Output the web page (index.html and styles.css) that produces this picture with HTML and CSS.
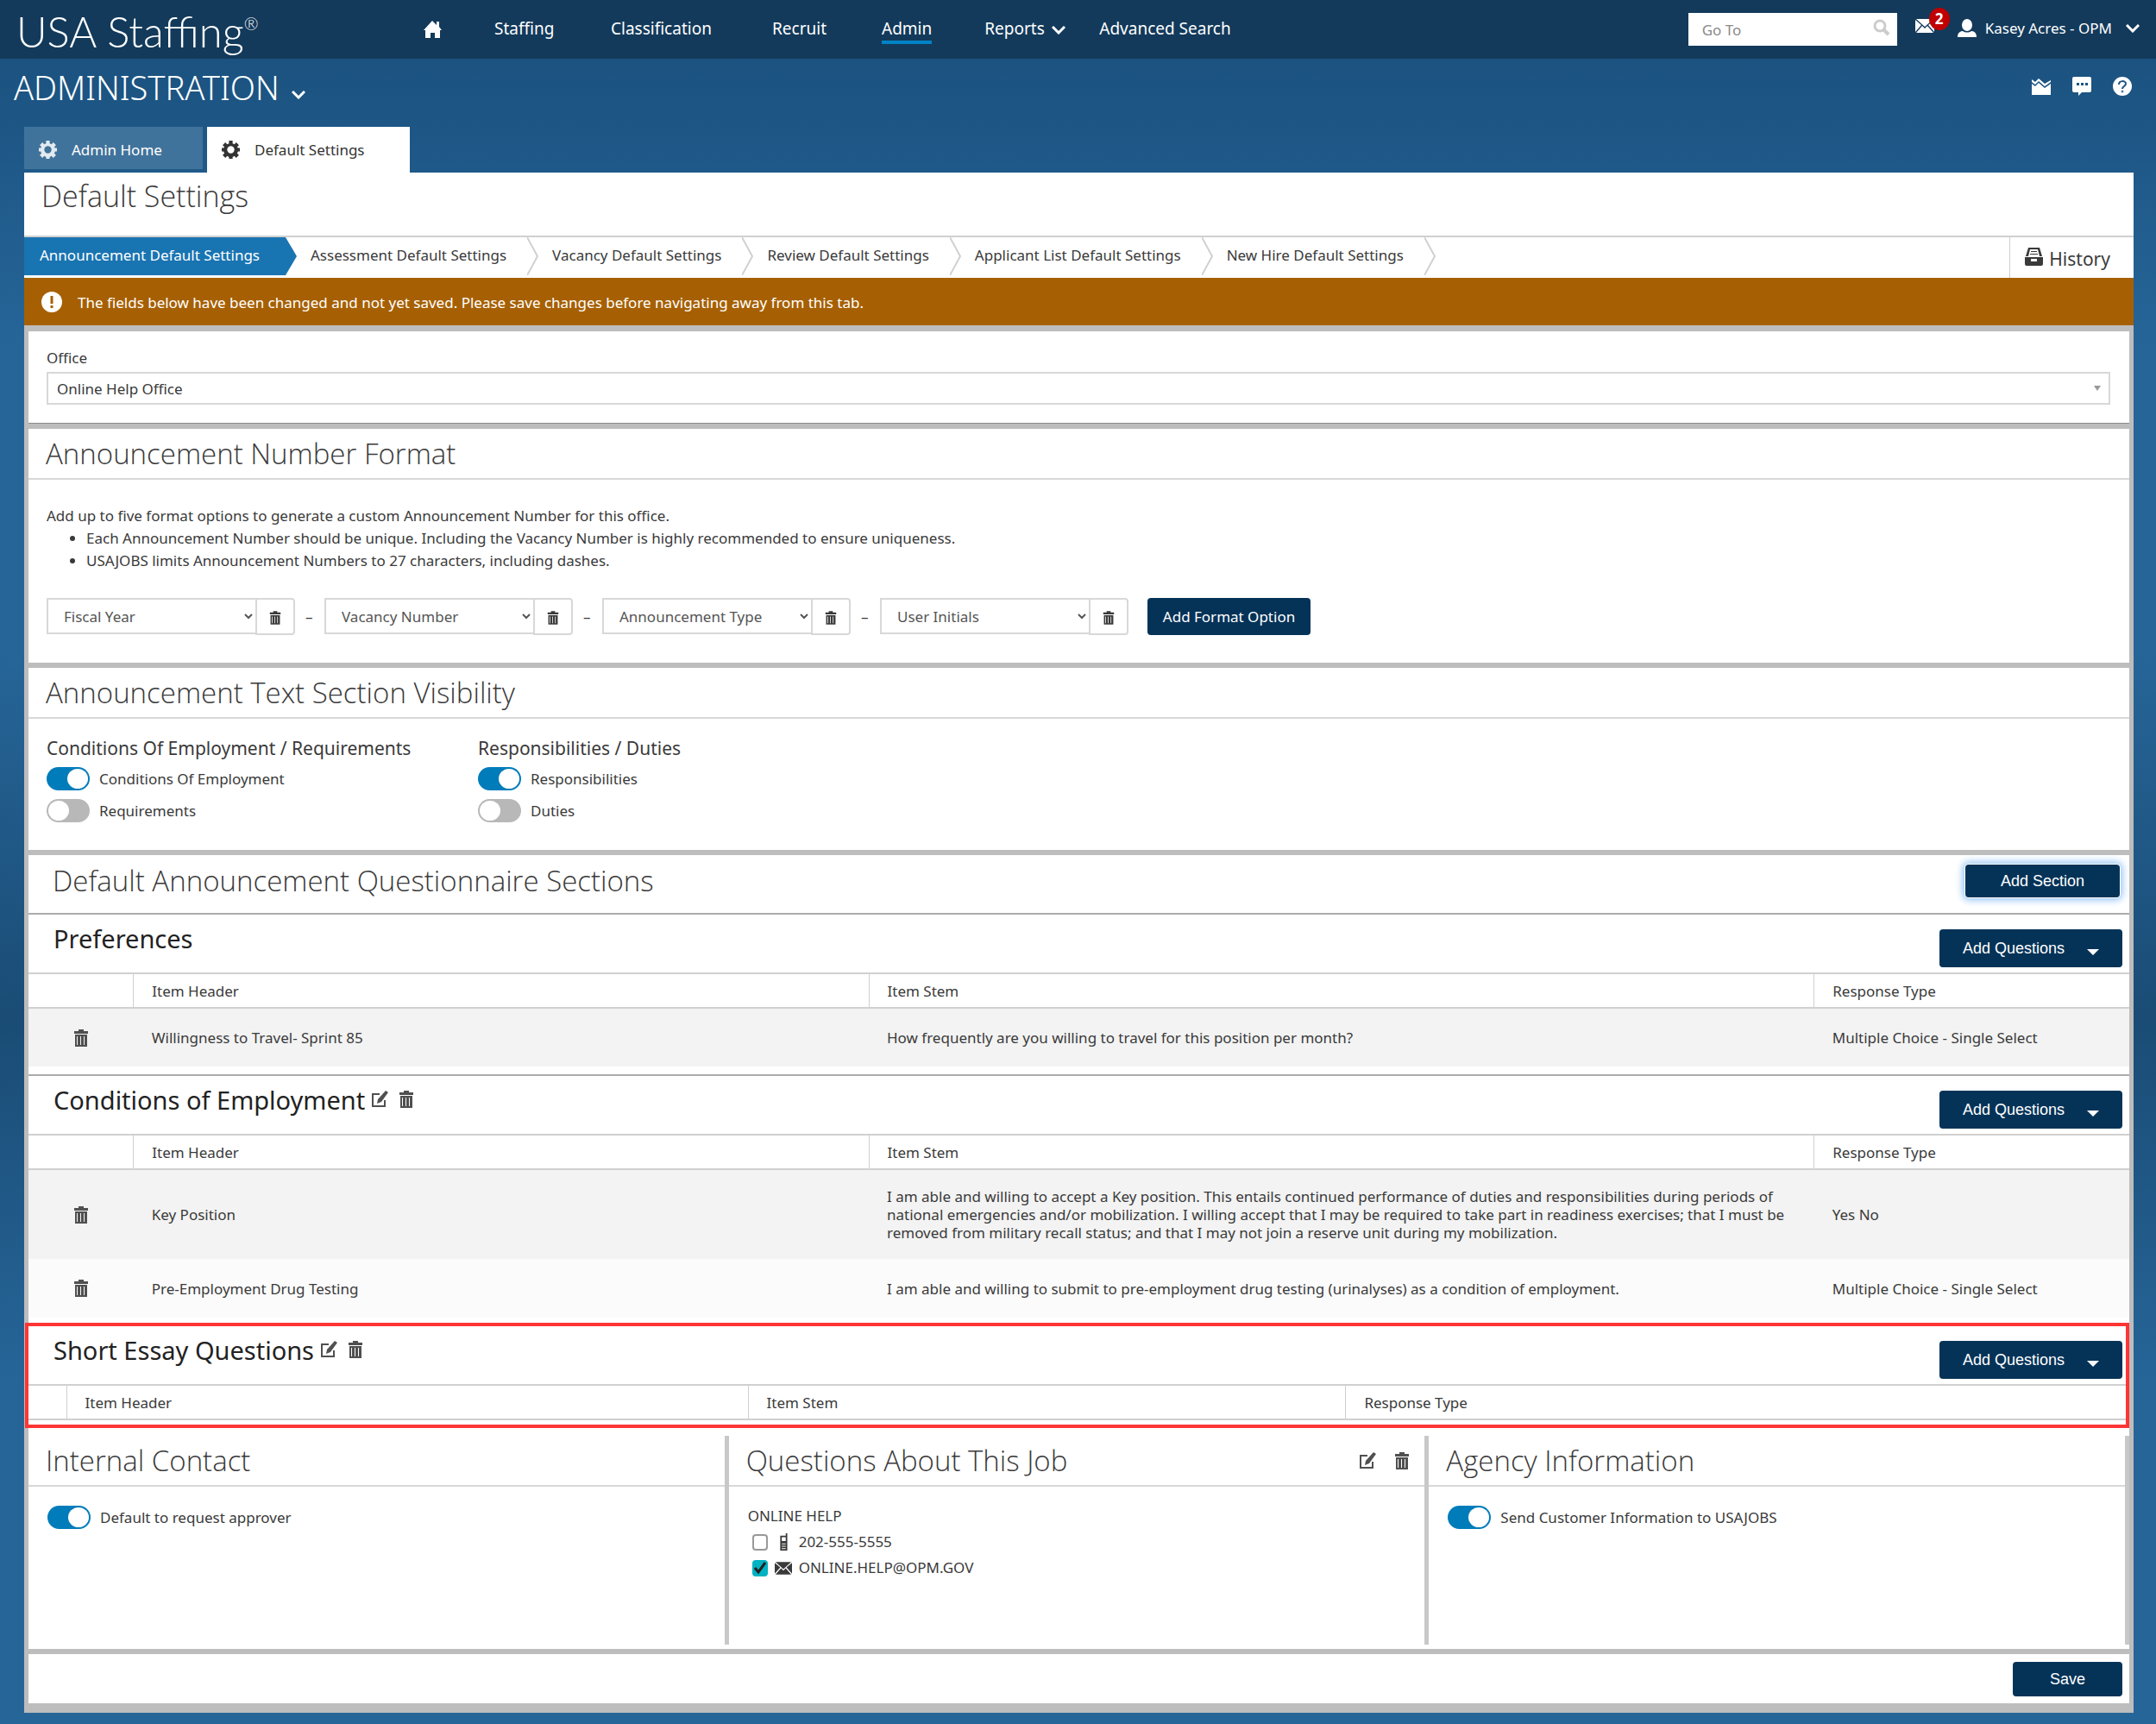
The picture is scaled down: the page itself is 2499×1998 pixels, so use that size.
FILE: index.html
```html
<!DOCTYPE html>
<html lang="en">
<head>
    <meta charset="UTF-8">
    <meta name="viewport" content="width=device-width, initial-scale=1.0">
    <title>USA Staffing - Default Settings</title>
    <link rel="stylesheet" href="styles.css">
</head>
<body>
    <svg class="sprite" aria-hidden="true">
        <symbol id="trash" viewBox="0 0 18 20">
            <path d="M6 0h6v2h5v3H1V2h5z"/>
            <path fill-rule="evenodd" d="M2 6h14v14H2zM4 8v10h1V8zM8 8v10h1V8zM12 8v10h1V8z"/>
        </symbol>
        <symbol id="edit" viewBox="0 0 20 20">
            <path fill="none" stroke="currentColor" stroke-width="2" d="M10 4H2v14h14v-7"/>
            <path d="M17 0l3 2-8 11-5 2 1-5z"/>
        </symbol>
        <symbol id="gear" viewBox="0 0 20 20">
            <path fill-rule="evenodd" d="M8 0h4v3l2 1 2-2 3 3-2 2 1 1h2v4h-2l-1 2 2 2-3 3-2-2-2 1v2H8v-2l-2-1-2 2-3-3 2-2-1-2H0V8h2l1-1-2-2 3-3 2 2 2-1zM10 6a4 4 0 1 0 0 8 4 4 0 0 0 0-8z"/>
        </symbol>
        <symbol id="mail" viewBox="0 0 22 16">
            <path d="M1 0h20l-10 9zM0 1l7 6-7 8zM22 1l-7 6 7 8zM8 8l3 3 3-3 7 8H1z"/>
        </symbol>
        <symbol id="chevron" viewBox="0 0 16 10">
            <path fill="none" stroke="currentColor" stroke-width="3" d="M1 1l7 7 7-7"/>
        </symbol>
        <symbol id="arrow" viewBox="0 0 13 44">
            <path fill="none" stroke="#d0d0d0" stroke-width="2" d="M0 0l12 22L0 44"/>
        </symbol>
    </svg>

    <header class="topbar">
        <a class="logo" href="#">USA Staffing<sup>&reg;</sup></a>
        <nav class="main-nav">
            <a class="nav-home" href="#" aria-label="Home">
                <svg width="21" height="20" viewBox="0 0 21 20"><path d="M10 0l5 5V1h3v6l3 4h-2v9h-6v-6H8v6H2v-9H0z"/></svg>
            </a>
            <a class="nav-staffing" href="#">Staffing</a>
            <a class="nav-classification" href="#">Classification</a>
            <a class="nav-recruit" href="#">Recruit</a>
            <a class="nav-admin active" href="#">Admin</a>
            <a class="nav-reports" href="#">Reports <svg width="16" height="10"><use href="#chevron"/></svg></a>
            <a href="#">Advanced Search</a>
        </nav>
        <form class="goto">
            <input type="text" placeholder="Go To" aria-label="Go To">
            <button type="button" aria-label="Search">
                <svg width="20" height="20" viewBox="0 0 20 20"><circle cx="8" cy="8" r="6" fill="none" stroke="#ccc" stroke-width="3"/><path d="M12 12l6 6" stroke="#ccc" stroke-width="4"/></svg>
            </button>
        </form>
        <a class="messages" href="#" aria-label="Messages">
            <svg width="22" height="16"><use href="#mail"/></svg>
            <span class="badge">2</span>
        </a>
        <a class="user" href="#">
            <svg width="22" height="21" viewBox="0 0 22 21"><ellipse cx="11" cy="7" rx="6" ry="7"/><path d="M0 21c0-5 3-7 6-7 3 2 7 2 10 0 3 0 6 2 6 7z"/></svg>
            <span>Kasey Acres - OPM</span>
            <svg class="user-chevron" width="16" height="10"><use href="#chevron"/></svg>
        </a>
    </header>

    <div class="workspace">
        <h1><a href="#">ADMINISTRATION <svg width="16" height="10"><use href="#chevron"/></svg></a></h1>
        <div class="workspace-links">
            <a href="#" aria-label="Reports">
                <svg width="22" height="19" viewBox="0 0 22 19"><path d="M0 1l4 3 4-4 7 6 7-4v2l-7 5-7-6-4 4-4-3z"/><path d="M0 6l4 3 4-4 7 6 7-5v13H0z"/></svg>
            </a>
            <a href="#" aria-label="Feedback">
                <svg width="22" height="22" viewBox="0 0 22 22"><path fill-rule="evenodd" d="M2 0h18q2 0 2 2v14q0 2-2 2h-9l-4 4v-4H2q-2 0-2-2V2q0-2 2-2zM5 7v3h3V7zm5 0v3h3V7zm5 0v3h3V7z"/></svg>
            </a>
            <a href="#" aria-label="Help">
                <svg width="22" height="22" viewBox="0 0 22 22"><circle cx="11" cy="11" r="11"/><path fill="none" stroke="#1c5481" stroke-width="2" d="M7 9c0-5 8-5 8-1 0 3-4 3-4 6"/><circle cx="11" cy="17" r="1" stroke="#1c5481"/></svg>
            </a>
        </div>
    </div>

    <nav class="tabs">
        <a class="tab" href="#"><svg width="21" height="21"><use href="#gear"/></svg>Admin Home</a>
        <a class="tab active" href="#"><svg width="21" height="21"><use href="#gear"/></svg>Default Settings</a>
    </nav>

    <main class="page">
        <h2 class="page-title">Default Settings</h2>

        <div class="steps">
            <a class="step active" href="#">Announcement Default Settings</a>
            <a class="step" href="#">Assessment Default Settings</a>
            <svg width="13" height="44"><use href="#arrow"/></svg>
            <a class="step" href="#">Vacancy Default Settings</a>
            <svg width="13" height="44"><use href="#arrow"/></svg>
            <a class="step" href="#">Review Default Settings</a>
            <svg width="13" height="44"><use href="#arrow"/></svg>
            <a class="step" href="#">Applicant List Default Settings</a>
            <svg width="13" height="44"><use href="#arrow"/></svg>
            <a class="step" href="#">New Hire Default Settings</a>
            <svg width="13" height="44"><use href="#arrow"/></svg>
            <a class="history" href="#">
                <svg width="21" height="22" viewBox="0 0 21 22"><path d="M4 1h13l3 10h-3L15 3H6L4 11H1z"/><path d="M7 5h7v1H7zM6 8h9v1H6z"/><path fill-rule="evenodd" d="M0 12h21v8q0 2-2 2H2q-2 0-2-2zM7 14v3h7v-3z"/></svg>
                History
            </a>
        </div>

        <div class="alert">
            <svg width="25" height="25" viewBox="0 0 25 25"><circle cx="12" cy="12" r="12" fill="#fff"/><path stroke="#a66003" stroke-width="3" d="M12 5v9m0 2v3"/></svg>
            The fields below have been changed and not yet saved. Please save changes before navigating away from this tab.
        </div>

        <div class="panel">
            <section class="card office">
                <label for="office">Office</label>
                <select id="office"><option>Online Help Office</option></select>
            </section>

            <section class="card">
                <h2 class="card-title">Announcement Number Format</h2>
                <div class="format">
                    <p>Add up to five format options to generate a custom Announcement Number for this office.</p>
                    <ul>
                        <li>Each Announcement Number should be unique. Including the Vacancy Number is highly recommended to ensure uniqueness.</li>
                        <li>USAJOBS limits Announcement Numbers to 27 characters, including dashes.</li>
                    </ul>
                    <div class="format-row">
                        <div class="format-option">
                            <select aria-label="Format option 1"><option>Fiscal Year</option></select>
                            <button aria-label="Remove format option 1"><svg width="14" height="16"><use href="#trash"/></svg></button>
                        </div>
                        <span>–</span>
                        <div class="format-option">
                            <select aria-label="Format option 2"><option>Vacancy Number</option></select>
                            <button aria-label="Remove format option 2"><svg width="14" height="16"><use href="#trash"/></svg></button>
                        </div>
                        <span>–</span>
                        <div class="format-option">
                            <select aria-label="Format option 3"><option>Announcement Type</option></select>
                            <button aria-label="Remove format option 3"><svg width="14" height="16"><use href="#trash"/></svg></button>
                        </div>
                        <span>–</span>
                        <div class="format-option">
                            <select aria-label="Format option 4"><option>User Initials</option></select>
                            <button aria-label="Remove format option 4"><svg width="14" height="16"><use href="#trash"/></svg></button>
                        </div>
                        <button class="btn btn-format">Add Format Option</button>
                    </div>
                </div>
            </section>

            <section class="card">
                <h2 class="card-title">Announcement Text Section Visibility</h2>
                <div class="visibility">
                    <div class="toggles">
                        <h3>Conditions Of Employment / Requirements</h3>
                        <label><input class="toggle" type="checkbox" checked> Conditions Of Employment</label>
                        <label><input class="toggle" type="checkbox"> Requirements</label>
                    </div>
                    <div class="toggles">
                        <h3>Responsibilities / Duties</h3>
                        <label><input class="toggle" type="checkbox" checked> Responsibilities</label>
                        <label><input class="toggle" type="checkbox"> Duties</label>
                    </div>
                </div>
            </section>

            <section class="card questionnaire">
                <div class="questionnaire-head">
                    <h2>Default Announcement Questionnaire Sections</h2>
                    <button class="btn btn-section">Add Section</button>
                </div>

                <div class="question-group">
                    <div class="group-head">
                        <h3>Preferences</h3>
                        <button class="btn btn-questions">Add Questions <span class="caret"></span></button>
                    </div>
                    <table>
                        <thead>
                            <tr><th class="col-icon"></th><th class="col-header">Item Header</th><th class="col-stem">Item Stem</th><th>Response Type</th></tr>
                        </thead>
                        <tbody>
                            <tr>
                                <td><button class="icon-btn" aria-label="Delete item"><svg width="18" height="20"><use href="#trash"/></svg></button></td>
                                <td>Willingness to Travel- Sprint 85</td>
                                <td>How frequently are you willing to travel for this position per month?</td>
                                <td>Multiple Choice - Single Select</td>
                            </tr>
                        </tbody>
                    </table>
                </div>

                <div class="question-group">
                    <div class="group-head">
                        <h3>Conditions of Employment</h3>
                        <button class="icon-btn" aria-label="Edit section"><svg width="20" height="20"><use href="#edit"/></svg></button>
                        <button class="icon-btn" aria-label="Delete section"><svg width="18" height="20"><use href="#trash"/></svg></button>
                        <button class="btn btn-questions">Add Questions <span class="caret"></span></button>
                    </div>
                    <table>
                        <thead>
                            <tr><th class="col-icon"></th><th class="col-header">Item Header</th><th class="col-stem">Item Stem</th><th>Response Type</th></tr>
                        </thead>
                        <tbody>
                            <tr>
                                <td><button class="icon-btn" aria-label="Delete item"><svg width="18" height="20"><use href="#trash"/></svg></button></td>
                                <td>Key Position</td>
                                <td>I am able and willing to accept a Key position. This entails continued performance of duties and responsibilities during periods of national emergencies and/or mobilization. I willing accept that I may be required to take part in readiness exercises; that I must be removed from military recall status; and that I may not join a reserve unit during my mobilization.</td>
                                <td>Yes No</td>
                            </tr>
                            <tr>
                                <td><button class="icon-btn" aria-label="Delete item"><svg width="18" height="20"><use href="#trash"/></svg></button></td>
                                <td>Pre-Employment Drug Testing</td>
                                <td>I am able and willing to submit to pre-employment drug testing (urinalyses) as a condition of employment.</td>
                                <td>Multiple Choice - Single Select</td>
                            </tr>
                        </tbody>
                    </table>
                </div>

                <div class="question-group highlight">
                    <div class="group-head">
                        <h3>Short Essay Questions</h3>
                        <button class="icon-btn" aria-label="Edit section"><svg width="20" height="20"><use href="#edit"/></svg></button>
                        <button class="icon-btn" aria-label="Delete section"><svg width="18" height="20"><use href="#trash"/></svg></button>
                        <button class="btn btn-questions">Add Questions <span class="caret"></span></button>
                    </div>
                    <table class="empty">
                        <thead>
                            <tr><th class="col-icon"></th><th class="col-header">Item Header</th><th class="col-stem">Item Stem</th><th>Response Type</th></tr>
                        </thead>
                    </table>
                </div>
            </section>

            <div class="card contacts">
                <section class="contact">
                    <div class="card-title"><h2>Internal Contact</h2></div>
                    <label class="contact-toggle"><input class="toggle" type="checkbox" checked> Default to request approver</label>
                </section>
                <section class="contact">
                    <div class="card-title">
                        <h2>Questions About This Job</h2>
                        <button class="icon-btn" aria-label="Edit contact"><svg width="20" height="20"><use href="#edit"/></svg></button>
                        <button class="icon-btn" aria-label="Delete contact"><svg width="18" height="20"><use href="#trash"/></svg></button>
                    </div>
                    <div class="contact-info">
                        <p>ONLINE HELP</p>
                        <label>
                            <input class="check" type="checkbox">
                            <svg width="20" height="20" viewBox="0 0 20 22"><path fill-rule="evenodd" d="M13 0h2v22H6V3h7zM8 5v5h5V5zM8 13h5v1H8zm0 3h5v1H8zm0 3h5v1H8z"/></svg>
                            202-555-5555
                        </label>
                        <label>
                            <input class="check" type="checkbox" checked>
                            <svg width="20" height="15"><use href="#mail"/></svg>
                            ONLINE.HELP@OPM.GOV
                        </label>
                    </div>
                </section>
                <section class="contact">
                    <div class="card-title"><h2>Agency Information</h2></div>
                    <label class="contact-toggle"><input class="toggle" type="checkbox" checked> Send Customer Information to USAJOBS</label>
                </section>
            </div>

            <div class="card save-bar">
                <button class="btn btn-save">Save</button>
            </div>
        </div>
    </main>
</body>
</html>
```
FILE: styles.css
```css
* {
    box-sizing: border-box;
}
body {
    margin: 0;
    min-height: 100vh;
    font-family: "Noto Sans", sans-serif;
    font-size: 17px;
    line-height: 21px;
    color: #3a3a3a;
    background: linear-gradient(#1b5280 68px, #266598 400px, #266598 760px, #1a4c75 1180px, #266598 1600px);
}
h1, h2, h3, p, ul {
    margin: 0;
}
h2 {
    font-family: "Open Sans", sans-serif;
    font-size: 33px;
    font-weight: 300;
}
a {
    color: inherit;
    text-decoration: none;
}
button, select, input {
    font: inherit;
    color: inherit;
    margin: 0;
}
button {
    cursor: pointer;
}
svg {
    fill: currentColor;
    flex: none;
}
.sprite {
    display: none;
}

/* header */
.topbar {
    display: flex;
    align-items: center;
    height: 68px;
    padding: 0 19px;
    color: #fff;
    background-color: #133a5b;
}
.logo {
    width: 472px;
    padding-top: 4px;
    font-family: Lato, sans-serif;
    font-size: 49px;
    line-height: 56px;
    font-weight: 300;
    white-space: nowrap;
}
.logo sup {
    font-size: 20px;
    line-height: 20px;
    vertical-align: 20px;
}
.main-nav {
    display: flex;
    flex: 1;
    height: 34px;
    line-height: 32px;
    font-size: 19px;
}
.nav-home {
    width: 82px;
    padding-top: 7px;
    line-height: 20px;
}
.nav-staffing {
    width: 135px;
}
.nav-classification {
    width: 187px;
}
.nav-recruit {
    width: 127px;
}
.nav-admin {
    margin-right: 61px;
}
.nav-admin.active {
    border-bottom: 4px solid #0083c7;
}
.nav-reports {
    width: 133px;
}
.nav-reports svg {
    margin-left: 3px;
}
.goto {
    display: flex;
    width: 242px;
    height: 38px;
    background-color: #fff;
}
.goto input {
    flex: 1;
    min-width: 0;
    padding: 0 16px;
    border: none;
    background: none;
}
.goto input::placeholder {
    color: #8a8a8a;
}
.goto button {
    padding: 0 8px;
    border: none;
    background: none;
}
.messages {
    position: relative;
    display: flex;
    margin: 0 27px 8px 21px;
}
.badge {
    position: absolute;
    left: 16px;
    top: -13px;
    width: 24px;
    height: 26px;
    border-radius: 50%;
    line-height: 26px;
    text-align: center;
    font-weight: bold;
    background-color: #c00000;
}
.user {
    display: flex;
    align-items: center;
    gap: 10px;
    padding-bottom: 3px;
}
.user-chevron {
    margin-left: 6px;
}

.workspace {
    display: flex;
    justify-content: space-between;
    height: 79px;
    padding: 0 28px 0 16px;
    color: #fff;
}
.workspace h1 {
    font-size: 38px;
    line-height: 66px;
    font-weight: 300;
}
.workspace h1 svg {
    margin-left: 4px;
    vertical-align: 1px;
}
.workspace-links {
    display: flex;
    align-items: center;
    gap: 25px;
    height: 68px;
}

/* tabs */
.tabs {
    display: flex;
    gap: 5px;
    height: 53px;
    padding-left: 28px;
}
.tab {
    display: flex;
    align-items: center;
    gap: 17px;
    width: 207px;
    height: 49px;
    padding: 3px 17px 0;
    color: #fff;
    background-color: #40739b;
}
.tab svg {
    opacity: 0.85;
}
.tab.active {
    width: 235px;
    height: 53px;
    padding-top: 0;
    color: #333;
    background-color: #fff;
}
.tab.active svg {
    opacity: 1;
}

.page {
    margin: 0 26px 0 28px;
}
.page-title {
    height: 73px;
    padding-left: 20px;
    font-size: 34px;
    line-height: 54px;
    background-color: #fff;
}

/* settings steps */
.steps {
    display: flex;
    height: 49px;
    border-top: 2px solid #d0d0d0;
    background-color: #fff;
}
.step {
    padding: 0 24px 0 16px;
    line-height: 42px;
    white-space: nowrap;
}
.step.active {
    height: 44px;
    padding: 0 43px 0 18px;
    color: #fff;
    background-color: #1974b2;
    clip-path: polygon(0 0, calc(100% - 13px) 0, 100% 50%, calc(100% - 13px) 100%, 0 100%);
}
.history {
    display: flex;
    gap: 7px;
    margin-left: auto;
    padding: 11px 27px 0 17px;
    border-left: 1px solid #d0d0d0;
    font-size: 21px;
    line-height: 28px;
}
.alert {
    display: flex;
    align-items: center;
    gap: 17px;
    height: 55px;
    padding: 2px 20px 0;
    color: #fff;
    background-color: #a66003;
}

/* cards */
.panel {
    display: flex;
    flex-direction: column;
    gap: 6px;
    padding: 7px 5px 11px;
    background-color: #bdbdbd;
}
.card {
    background-color: #fff;
}
.card-title {
    padding-left: 20px;
    border-bottom: 2px solid #d8d8d8;
    line-height: 57px;
}
.office {
    padding: 20px 22px 21px 21px;
    border-bottom: 1px solid #8a8a8a;
}
.office label {
    display: block;
    margin-bottom: 6px;
}
.office select {
    width: 100%;
    height: 38px;
    padding: 0 10px;
    border: 2px solid #d8d8d8;
    appearance: none;
    background: #fff url('data:image/svg+xml,<svg xmlns="http://www.w3.org/2000/svg" width="8" height="6"><path fill="%23999" d="M0 0h8L4 6z"/></svg>') no-repeat right 9px center;
}
.format {
    padding: 29px 21px 32px;
    line-height: 26px;
}
.format ul {
    padding-left: 46px;
}
.format-row {
    display: flex;
    gap: 12px;
    margin-top: 30px;
    line-height: 43px;
}
.format-row span {
    width: 10px;
}
.format-option {
    display: flex;
}
.format-option select {
    width: 242px;
    height: 42px;
    padding: 0 0 0 14px;
    border: 2px solid #d8d8d8;
    border-right: none;
    border-radius: 0;
    color: #555;
    background-color: #fff;
}
.format-option button {
    width: 46px;
    height: 43px;
    border: 2px solid #d8d8d8;
    border-radius: 0 4px 4px 0;
    background-color: #fff;
}
.btn {
    border: none;
    border-radius: 4px;
    color: #fff;
    font-family: "Liberation Sans", sans-serif;
    font-size: 18px;
    line-height: 21px;
    background-color: #053358;
}
.btn-format {
    width: 189px;
    height: 43px;
    margin-left: 10px;
    font-family: "Noto Sans", sans-serif;
    font-size: 17px;
}
.visibility {
    display: flex;
    padding: 19px 21px 32px;
}
.toggles {
    display: flex;
    flex-direction: column;
    gap: 10px;
    width: 500px;
}
.toggles h3 {
    margin-bottom: -3px;
    font-size: 21px;
    line-height: 30px;
    font-weight: normal;
}
.toggles label, .contact-toggle {
    display: flex;
    align-items: center;
    gap: 11px;
}
.toggle {
    appearance: none;
    width: 50px;
    height: 27px;
    padding: 2px;
    border-radius: 14px;
    background-color: #b8b8b8;
}
.toggle::before {
    content: "";
    display: block;
    width: 24px;
    height: 23px;
    border-radius: 50%;
    background-color: #fff;
}
.toggle:checked {
    background-color: #007cba;
}
.toggle:checked::before {
    margin-left: auto;
}

/* questionnaire */
.questionnaire-head {
    display: flex;
    justify-content: space-between;
    align-items: flex-start;
    height: 69px;
    padding: 0 11px 0 28px;
    border-bottom: 2px solid #ababab;
    line-height: 60px;
}
.btn-section {
    width: 179px;
    height: 38px;
    margin-top: 11px;
    box-shadow: 0 0 0 1px #fff, 0 0 8px 3px #8fc0f5;
}
.group-head {
    display: flex;
    height: 67px;
    padding: 0 8px 0 29px;
}
.group-head h3 {
    margin-right: 7px;
    font-size: 29px;
    line-height: 55px;
    font-weight: normal;
    color: #222;
}
.icon-btn {
    display: flex;
    padding: 0;
    border: none;
    background: none;
    color: #505050;
}
.group-head .icon-btn {
    margin: 17px 12px 0 0;
}
.btn-questions {
    display: flex;
    align-items: center;
    width: 212px;
    height: 44px;
    margin: 17px 0 0 auto;
    padding: 0 27px;
}
.caret {
    margin: 8px 0 0 auto;
    border: 7px solid transparent;
    border-top-color: #fff;
    border-bottom: none;
}
.question-group + .question-group {
    margin-top: 9px;
    border-top: 2px solid #ababab;
}
table {
    width: 100%;
    border-collapse: collapse;
    table-layout: fixed;
}
th {
    height: 40px;
    padding: 0 21px;
    border: 1px solid #d0d0d0;
    border-width: 2px 0 2px 1px;
    text-align: left;
    font-weight: normal;
}
th:first-child {
    border-left: none;
}
td {
    height: 68px;
    padding: 20px 21px;
}
td .icon-btn {
    margin: 0 auto;
}
tbody tr {
    background-color: #fbfbfb;
}
tbody tr:nth-child(odd) {
    background-color: #f3f3f3;
}
.col-icon {
    width: 5%;
}
.col-header {
    width: 35%;
}
.col-stem {
    width: 45%;
}
.empty .col-icon {
    width: 44px;
}
.empty .col-header {
    width: 32.5%;
}
.empty .col-stem {
    width: 28.5%;
}
.question-group.highlight {
    margin: 6px 0 0 -4px;
    padding-bottom: 5px;
    border: 4px solid #ff3535;
}
.highlight .group-head {
    padding-right: 4px;
}

/* contacts */
.contacts {
    display: grid;
    grid-template-columns: repeat(3, 1fr);
    margin-top: -6px;
    padding: 9px 0 5px;
}
.contact {
    height: 242px;
    border-right: 5px solid #c8c8c8;
}
.contact .card-title {
    display: flex;
    align-items: center;
    padding-right: 17px;
}
.contact h2 {
    margin-right: auto;
}
.contact .card-title .icon-btn {
    margin-left: 21px;
}
.contact-toggle {
    padding: 22px;
}
.contact-info {
    padding: 19px 22px;
    line-height: 30px;
}
.contact-info label {
    display: flex;
    align-items: center;
    gap: 8px;
    padding-left: 5px;
}
.check {
    appearance: none;
    width: 18px;
    height: 19px;
    border: 2px solid #999;
    border-radius: 4px;
}
.check:checked {
    border: none;
    background: #00b2c2 url('data:image/svg+xml,<svg xmlns="http://www.w3.org/2000/svg" width="14" height="14"><path fill="none" stroke="%23222" stroke-width="3" d="M1 7l4 5 8-11"/></svg>') no-repeat center;
}
.save-bar {
    display: flex;
    justify-content: flex-end;
    padding: 9px 8px 8px;
}
.btn-save {
    width: 127px;
    height: 40px;
}
```
